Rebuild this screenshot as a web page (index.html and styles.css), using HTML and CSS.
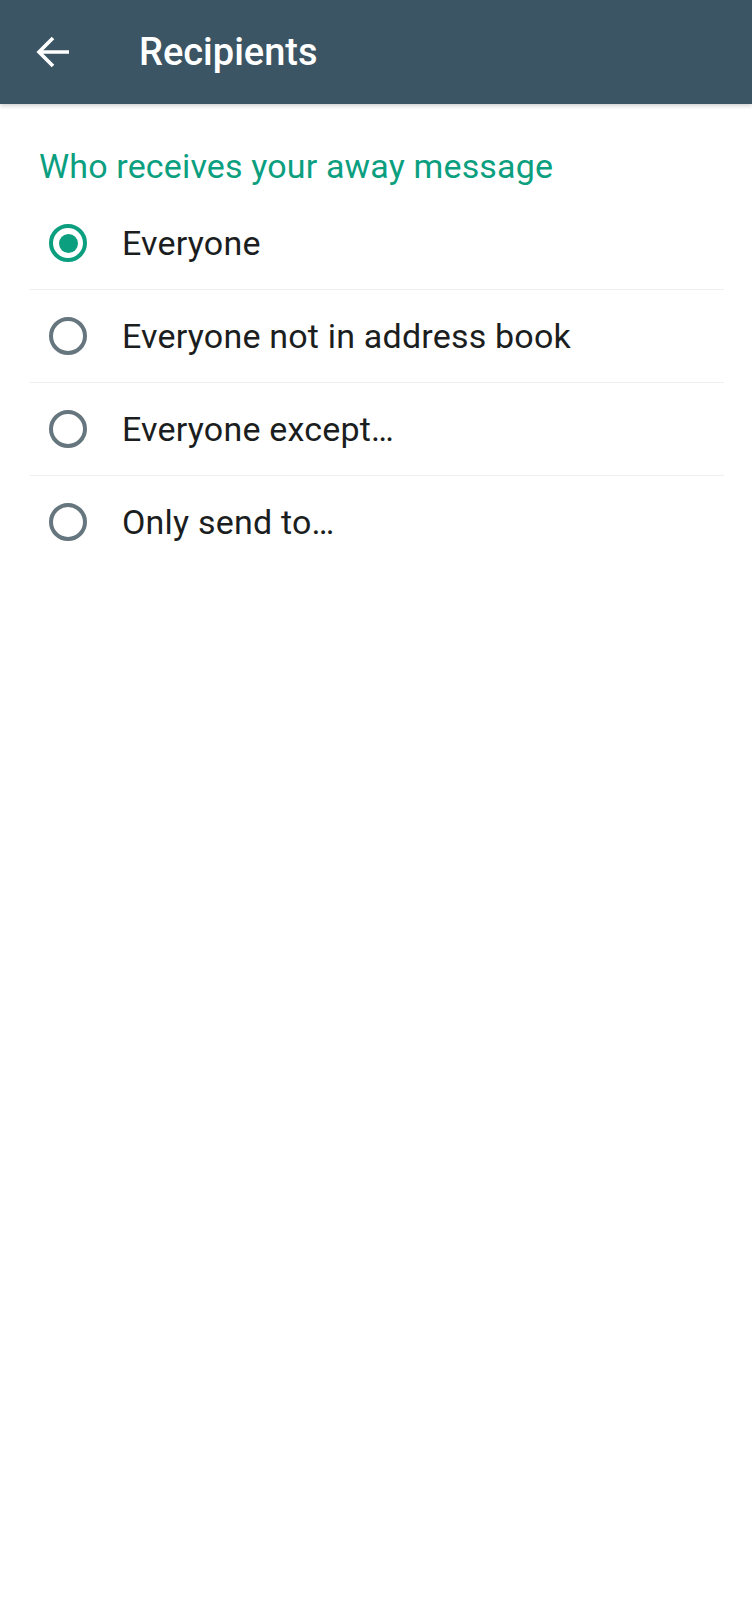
FILE: index.html
```html
<!DOCTYPE html>
<html lang="en">
  <head>
    <meta charset="UTF-8" />
    <meta name="viewport" content="width=device-width, initial-scale=1.0" />
    <title>Recipients</title>
    <link rel="stylesheet" href="styles.css">
  </head>
  <body>
    <header class="toolbar">
      <button class="back" type="button" aria-label="Back">
        <svg width="34" height="32" viewBox="0 0 34 32">
          <path d="M33 16H3M17 2L3 16l14 14" fill="none" stroke="#fff" stroke-width="3.6" />
        </svg>
      </button>
      <h1 class="title">Recipients</h1>
    </header>

    <main class="content">
      <h2 class="section-title">Who receives your away message</h2>
      <ul class="options">
        <li class="option">
          <span class="radio checked"></span>
          <span class="label">Everyone</span>
        </li>
        <li class="option">
          <span class="radio"></span>
          <span class="label">Everyone not in address book</span>
        </li>
        <li class="option">
          <span class="radio"></span>
          <span class="label">Everyone except…</span>
        </li>
        <li class="option">
          <span class="radio"></span>
          <span class="label">Only send to…</span>
        </li>
      </ul>
    </main>
  </body>
</html>
```

FILE: styles.css
```css
body {
  margin: 0;
  font-family: Roboto, "Noto Sans", Arial, sans-serif;
  background: #fff;
  color: #1b1e20;
}
.toolbar {
  height: 104px;
  background: #3b5565;
  display: flex;
  align-items: center;
  box-shadow: 0 2px 4px rgba(0, 0, 0, 0.18);
  position: relative;
}
.back {
  background: none;
  border: none;
  padding: 0;
  margin-left: 36px;
  width: 34px;
  height: 32px;
  display: flex;
}
.title {
  margin: 0 0 0 69px;
  color: #fff;
  font-size: 38px;
  font-weight: 500;
}
.content {
  padding: 0 28px 0 30px;
}
.section-title {
  margin: 0;
  padding: 42px 0 0 9px;
  color: #0b9f80;
  font-size: 34px;
  font-weight: 400;
  line-height: 40px;
  letter-spacing: 0.15px;
}
.options {
  list-style: none;
  margin: 11px 0 0;
  padding: 0;
}
.option {
  height: 92px;
  display: flex;
  align-items: center;
  border-bottom: 1px solid #efefef;
}
.option:last-child {
  border-bottom: none;
}
.radio {
  width: 30px;
  height: 30px;
  border: 4px solid #66767e;
  border-radius: 50%;
  margin-left: 19px;
  flex-shrink: 0;
  display: flex;
  align-items: center;
  justify-content: center;
}
.radio.checked {
  border-color: #0b9f80;
}
.radio.checked::after {
  content: "";
  width: 19px;
  height: 19px;
  border-radius: 50%;
  background: #0b9f80;
}
.label {
  margin-left: 35px;
  font-size: 34px;
  letter-spacing: 0.2px;
}
```
